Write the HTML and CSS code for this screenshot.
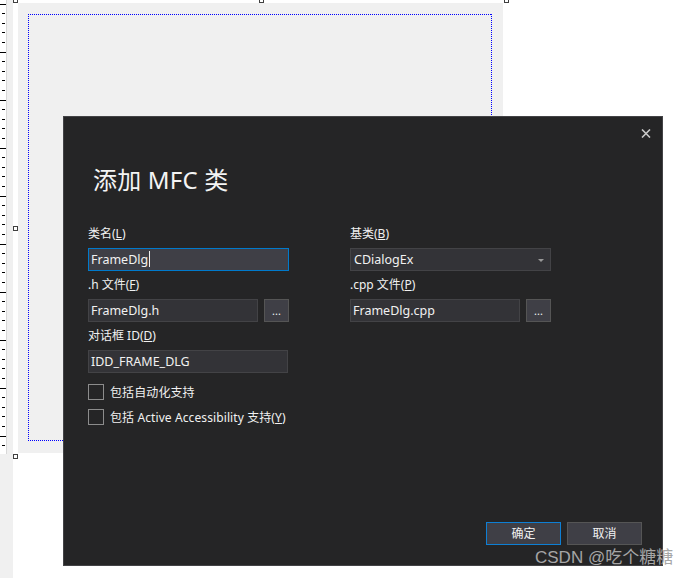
FILE: index.html
```html
<!DOCTYPE html>
<html lang="zh-CN">
<head>
<meta charset="utf-8">
<title>添加 MFC 类</title>
<link rel="stylesheet" href="styles.css">
</head>
<body>
<div class="app">
  <div class="side"><div class="ruler"></div></div>
  <div class="designer">
    <div class="canvas"><div class="frame"></div></div>
    <span class="handle h-tl"></span>
    <span class="handle h-tm"></span>
    <span class="handle h-tr"></span>
    <span class="handle h-ml"></span>
    <span class="handle h-bl"></span>
  </div>
</div>

<div class="dialog">
  <div class="dlg-top">
    <span class="close">
      <svg width="10" height="9" viewBox="0 0 10 9"><path d="M1 0.5 L9 8.5 M9 0.5 L1 8.5" stroke="#c8c8c8" stroke-width="1.6"/></svg>
    </span>
  </div>
  <h1 class="title">添加 MFC 类</h1>
  <div class="form">
    <div class="col">
      <div class="field">
        <div class="label">类名(<u>L</u>)</div>
        <div class="input focus">FrameDlg<span class="caret"></span></div>
      </div>
      <div class="field">
        <div class="label">.h 文件(<u>F</u>)</div>
        <div class="line">
          <div class="input short">FrameDlg.h</div>
          <div class="browse">...</div>
        </div>
      </div>
      <div class="field">
        <div class="label">对话框 ID(<u>D</u>)</div>
        <div class="input narrow">IDD_FRAME_DLG</div>
      </div>
    </div>
    <div class="col">
      <div class="field">
        <div class="label">基类(<u>B</u>)</div>
        <div class="input combo">CDialogEx<span class="arrow"></span></div>
      </div>
      <div class="field">
        <div class="label">.cpp 文件(<u>P</u>)</div>
        <div class="line">
          <div class="input short">FrameDlg.cpp</div>
          <div class="browse">...</div>
        </div>
      </div>
    </div>
  </div>
  <div class="checks">
    <div class="check"><span class="box"></span><span>包括自动化支持</span></div>
    <div class="check"><span class="box"></span><span>包括 Active Accessibility 支持(<u>Y</u>)</span></div>
  </div>
  <div class="actions">
    <div class="btn primary">确定</div>
    <div class="btn">取消</div>
  </div>
</div>

<div class="watermark">CSDN @吃个糖糖</div>
</body>
</html>
```

FILE: styles.css
```css
* { box-sizing: border-box; }

html, body {
  margin: 0;
  padding: 0;
}

body {
  width: 689px;
  height: 578px;
  overflow: hidden;
  background: #ffffff;
  position: relative;
  font-family: "Noto Sans", "Noto Sans CJK SC", sans-serif;
  font-size: 12px;
}

.app {
  display: flex;
  height: 578px;
}

.side {
  width: 13px;
  height: 100%;
  background: #f0f0f0;
}

.ruler {
  width: 7px;
  height: 454px;
  background-color: #ffffff;
  border-right: 1px solid #d8d8d8;
  background-image:
    linear-gradient(to bottom, transparent 0 9px, #000 9px 10px, transparent 10px 19px, #000 19px 20px, transparent 20px 28px, #000 28px 29px, transparent 29px 38px, #000 38px 39px, transparent 39px),
    linear-gradient(to bottom, #000 0 1px, transparent 1px);
  background-size: 3px 48px, 6px 48px;
  background-position: 2px 4px, 0 4px;
  background-repeat: repeat-y, repeat-y;
}

.designer {
  position: relative;
  flex: 1;
}

.canvas {
  margin-left: 5px;
  margin-top: 3px;
  width: 485px;
  height: 450px;
  background: #f0f0f0;
  padding: 11px 11px 12px 10px;
}

.frame {
  width: 100%;
  height: 100%;
  background-image:
    repeating-linear-gradient(to right, #0000ff 0 1px, transparent 1px 2px),
    repeating-linear-gradient(to right, #0000ff 0 1px, transparent 1px 2px),
    repeating-linear-gradient(to bottom, #0000ff 0 1px, transparent 1px 2px),
    repeating-linear-gradient(to bottom, #0000ff 0 1px, transparent 1px 2px);
  background-size: 100% 1px, 100% 1px, 1px 100%, 1px 100%;
  background-position: 0 0, 0 100%, 0 0, 100% 0;
  background-repeat: no-repeat;
}

.handle {
  position: absolute;
  width: 5px;
  height: 5px;
  background: #ffffff;
  border: 1px solid #404040;
}
.h-tl { left: 0; top: -2px; }
.h-tm { left: 246px; top: -2px; }
.h-tr { left: 491px; top: -2px; }
.h-ml { left: 0; top: 226px; }
.h-bl { left: 0; top: 454px; }

/* Dialog */
.dialog {
  position: absolute;
  left: 63px;
  top: 116px;
  width: 600px;
  height: 450px;
  background: #252526;
  border: 1px solid #434346;
  color: #f1f1f1;
  display: flex;
  flex-direction: column;
}

.dlg-top {
  display: flex;
  justify-content: flex-end;
  padding: 12px 11px 0 0;
  height: 22px;
}
.close { display: block; width: 10px; height: 9px; }
.close svg { display: block; }

.title {
  margin: 25px 0 0 29px;
  font-size: 24px;
  line-height: 32px;
  font-weight: normal;
  color: #f4f4f4;
  letter-spacing: 0.2px;
}

.form {
  margin: 29px 0 0 24px;
  display: grid;
  grid-template-columns: 201px 201px;
  column-gap: 61px;
  align-items: start;
}

.col {
  display: flex;
  flex-direction: column;
  gap: 5px;
}

.label {
  height: 18px;
  line-height: 18px;
  margin-bottom: 5px;
  color: #f1f1f1;
  white-space: nowrap;
}

.input {
  position: relative;
  height: 23px;
  line-height: 21px;
  padding-left: 2px;
  background: #333337;
  border: 1px solid #434346;
  color: #f1f1f1;
  white-space: nowrap;
  font-size: 12.5px;
}
.input.focus {
  background: #3f3f46;
  border-color: #007acc;
}
.input.short { width: 170px; }
.input.narrow { width: 200px; }
.input.combo { padding-left: 3px; }

.caret {
  display: inline-block;
  width: 1px;
  height: 16px;
  background: #f1f1f1;
  vertical-align: -3px;
  margin-left: 1px;
}

.arrow {
  position: absolute;
  right: 6px;
  top: 10px;
  width: 0;
  height: 0;
  border-left: 3px solid transparent;
  border-right: 3px solid transparent;
  border-top: 3px solid #999999;
}

.line {
  display: flex;
  gap: 6px;
}

.browse {
  width: 25px;
  height: 23px;
  background: #3f3f46;
  border: 1px solid #555555;
  color: #f1f1f1;
  text-align: center;
  line-height: 21px;
  font-size: 11px;
}

.checks {
  margin: 11px 0 0 24px;
  display: flex;
  flex-direction: column;
  gap: 9px;
}

.check {
  display: flex;
  align-items: center;
  gap: 6px;
  height: 16px;
  color: #f1f1f1;
  white-space: nowrap;
  letter-spacing: 0.1px;
}

.box {
  width: 16px;
  height: 16px;
  border: 1px solid #8c8c8c;
  background: #252526;
}

.actions {
  margin-top: auto;
  display: flex;
  justify-content: flex-end;
  gap: 6px;
  padding: 0 20px 20px 0;
}

.btn {
  width: 75px;
  height: 23px;
  line-height: 21px;
  text-align: center;
  background: #3f3f46;
  border: 1px solid #555555;
  color: #f1f1f1;
}
.btn.primary { border-color: #0e7fd4; }

.watermark {
  position: absolute;
  left: 535px;
  top: 548px;
  font-family: "Liberation Sans", "Noto Sans CJK SC", sans-serif;
  font-size: 17px;
  line-height: 20px;
  color: #a6a6a6;
  white-space: nowrap;
}
```
